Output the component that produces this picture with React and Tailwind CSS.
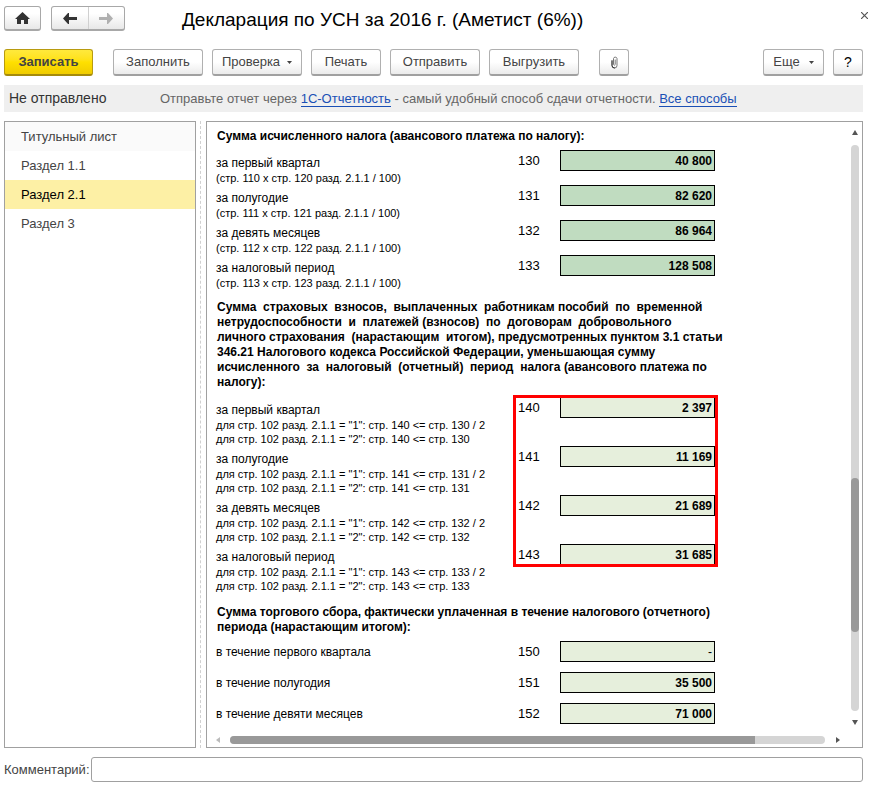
import React, { useState } from 'react';
import clsx from 'clsx';

const sections = ['Титульный лист', 'Раздел 1.1', 'Раздел 2.1', 'Раздел 3'];

const calculatedTax = [
  { code: '130', label: 'за первый квартал', notes: ['(стр. 110 x стр. 120 разд. 2.1.1 / 100)'], value: '40 800' },
  { code: '131', label: 'за полугодие', notes: ['(стр. 111 x стр. 121 разд. 2.1.1 / 100)'], value: '82 620' },
  { code: '132', label: 'за девять месяцев', notes: ['(стр. 112 x стр. 122 разд. 2.1.1 / 100)'], value: '86 964' },
  { code: '133', label: 'за налоговый период', notes: ['(стр. 113 x стр. 123 разд. 2.1.1 / 100)'], value: '128 508' },
];

const contributions = [
  {
    code: '140',
    label: 'за первый квартал',
    notes: ['для стр. 102 разд. 2.1.1 = "1": стр. 140 <= стр. 130 / 2', 'для стр. 102 разд. 2.1.1 = "2": стр. 140 <= стр. 130'],
    value: '2 397',
  },
  {
    code: '141',
    label: 'за полугодие',
    notes: ['для стр. 102 разд. 2.1.1 = "1": стр. 141 <= стр. 131 / 2', 'для стр. 102 разд. 2.1.1 = "2": стр. 141 <= стр. 131'],
    value: '11 169',
  },
  {
    code: '142',
    label: 'за девять месяцев',
    notes: ['для стр. 102 разд. 2.1.1 = "1": стр. 142 <= стр. 132 / 2', 'для стр. 102 разд. 2.1.1 = "2": стр. 142 <= стр. 132'],
    value: '21 689',
  },
  {
    code: '143',
    label: 'за налоговый период',
    notes: ['для стр. 102 разд. 2.1.1 = "1": стр. 143 <= стр. 133 / 2', 'для стр. 102 разд. 2.1.1 = "2": стр. 143 <= стр. 133'],
    value: '31 685',
  },
];

const tradeFee = [
  { code: '150', label: 'в течение первого квартала', value: '-' },
  { code: '151', label: 'в течение полугодия', value: '35 500' },
  { code: '152', label: 'в течение девяти месяцев', value: '71 000' },
];

const contributionsTitle = [
  'Сумма  страховых  взносов,  выплаченных  работникам пособий  по  временной',
  'нетрудоспособности  и  платежей (взносов)  по  договорам  добровольного',
  'личного страхования  (нарастающим  итогом), предусмотренных пунктом 3.1 статьи',
  '346.21 Налогового кодекса Российской Федерации, уменьшающая сумму',
  'исчисленного  за  налоговый  (отчетный)  период  налога (авансового платежа по',
  'налогу):',
];

const Caret = () => (
  <svg width="5" height="3" viewBox="0 0 5 3" className="shrink-0" aria-hidden="true">
    <path d="M0 0h5L2.5 3z" fill="#444" />
  </svg>
);

const Arrow = ({ className, flip }) => (
  <svg width="14" height="11" viewBox="0 0 14 11" className={className} aria-hidden="true">
    <path
      d={flip ? 'M0 4h8V0h1l5 5.5L9 11H8V7H0z' : 'M14 4H6V0H5L0 5.5 5 11h1V7h8z'}
      fill="currentColor"
    />
  </svg>
);

const ToolButton = ({ className, children, ...props }) => (
  <button
    className={clsx(
      'flex h-[27px] shrink-0 items-center justify-center rounded-[3px] border border-b-2 text-[13px]',
      className
    )}
    {...props}
  >
    {children}
  </button>
);

const plain = 'border-[#b0b0b0] border-b-[#a0a0a0] bg-linear-to-b from-white from-50% to-[#ebebeb] text-[#444]';
const navBox = 'rounded-[3px] border border-b-2 border-[#a8a8a8] bg-linear-to-b from-white from-30% to-[#e8e8e8]';

const FormTitle = ({ lines }) => (
  <h2 className="pl-px text-[12px] leading-[15px] font-bold">
    {lines.map((line) => (
      <span key={line} className="block whitespace-pre">{line}</span>
    ))}
  </h2>
);

const FormRow = ({ row, dark }) => {
  const [value, setValue] = useState(row.value);

  return (
    <div className="grid grid-cols-[302px_42px_155px] items-start">
      <label htmlFor={`line-${row.code}`} className={row.notes ? 'pt-[5px]' : 'pt-[3px]'}>
        <span className="block text-[12px] leading-4">{row.label}</span>
        {row.notes?.map((note) => (
          <span key={note} className="block text-[11px] leading-[14px] whitespace-nowrap">{note}</span>
        ))}
      </label>
      <span className="text-[13px] leading-[21px]">{row.code}</span>
      <input
        id={`line-${row.code}`}
        value={value}
        onChange={(e) => setValue(e.target.value)}
        className={clsx(
          'h-[21px] w-full border border-black pr-[2px] text-right text-[12px] outline-none',
          value !== '-' && 'font-bold',
          dark ? 'bg-[#c0dcc0]' : 'bg-[#e6efdc]'
        )}
      />
    </div>
  );
};

export default function App() {
  const [active, setActive] = useState('Раздел 2.1');

  return (
    <div className="flex flex-col bg-white pl-1 font-['Liberation_Sans',Arial,sans-serif] text-black">
      <header className="flex items-start pt-[6px]">
        <button className={clsx(navBox, 'flex h-[25px] w-[37px] items-center justify-center')} aria-label="Домой">
          <svg width="15" height="12" viewBox="0 0 15 12" aria-hidden="true">
            <path d="M7.5 0L0 7h2v5h4V8h3v4h4V7h2z" fill="#333" />
          </svg>
        </button>
        <div className={clsx(navBox, 'ml-[10px] flex h-[25px] w-[74px]')}>
          <button className="flex flex-1 items-center justify-center border-r border-[#d0d0d0]" aria-label="Назад">
            <Arrow className="text-[#333]" />
          </button>
          <button className="flex flex-1 items-center justify-center" aria-label="Вперед">
            <Arrow flip className="text-[#b0b0b0]" />
          </button>
        </div>
        <h1 className="ml-[57px] text-[19px] leading-[27px] whitespace-nowrap">Декларация по УСН за 2016 г. (Аметист (6%))</h1>
        <button className="mt-[6px] mr-[2px] ml-auto" aria-label="Закрыть">
          <svg width="7" height="7" viewBox="0 0 7 7" aria-hidden="true">
            <path d="M0 0l7 7M7 0L0 7" stroke="#555" strokeWidth="1.2" />
          </svg>
        </button>
      </header>

      <div className="flex flex-col pr-[7px]">
        <div className="mt-4 flex gap-[9px]">
          <ToolButton className="mr-[11px] w-[89px] border-[#b89b10] border-b-[#a58b0c] bg-linear-to-b from-[#ffe93c] via-[#ffe000] to-[#f0cc00] font-bold text-[#444]">
            Записать
          </ToolButton>
          <ToolButton className={clsx(plain, 'w-[90px]')}>Заполнить</ToolButton>
          <ToolButton className={clsx(plain, 'w-[90px] gap-[7px]')}>Проверка <Caret /></ToolButton>
          <ToolButton className={clsx(plain, 'w-[70px]')}>Печать</ToolButton>
          <ToolButton className={clsx(plain, 'w-[90px]')}>Отправить</ToolButton>
          <ToolButton className={clsx(plain, 'w-[90px]')}>Выгрузить</ToolButton>
          <ToolButton className={clsx(plain, 'ml-[11px] w-[30px]')} aria-label="Прикрепить файл">
            <svg width="7" height="13" viewBox="0 0 7 13" fill="none" strokeLinecap="round" aria-hidden="true">
              <path d="M1 4.500V9.500a2.500 2.500 0 0 0 5 0V2.500a1.800 1.800 0 0 0-3.500 0V8.500a1 1 0 0 0 1.700 0V4" stroke="#777" />
              <path d="M1 5v4.500a2.500 2.500 0 0 0 2.500 2.500" stroke="#333" />
            </svg>
          </ToolButton>
          <ToolButton className={clsx(plain, 'ml-auto w-[61px] gap-[9px]')}>Еще <Caret /></ToolButton>
          <ToolButton className={clsx(plain, 'w-[30px] text-[14px] text-black')} aria-label="Справка">?</ToolButton>
        </div>

        <div className="mt-[9px] flex h-[27px] items-center bg-[#efefef] pl-[5px]">
          <span className="w-[151px] text-[14px] text-[#333]">Не отправлено</span>
          <p className="text-[13px] whitespace-nowrap text-[#666]">
            Отправьте отчет через <a href="#report" className="border-b border-[#1a4fb5] text-[#1a4fb5]">1С-Отчетность</a> - самый удобный способ сдачи отчетности.{' '}
            <a href="#all" className="border-b border-[#1a4fb5] text-[#1a4fb5]">Все способы</a>
          </p>
        </div>

        <main className="mt-[9px] flex">
          <nav className="w-[192px] shrink-0 border border-[#a0a0a0]">
            {sections.map((name, i) => (
              <button
                key={name}
                onClick={() => setActive(name)}
                className={clsx(
                  'block h-[29px] w-full pl-4 text-left text-[13px]',
                  active === name ? 'bg-[#fdf0a5] text-black' : 'text-[#444]',
                  active !== name && i === 0 && 'bg-[#fafafa]'
                )}
              >
                {name}
              </button>
            ))}
          </nav>
          <div className="ml-1 w-[6px] shrink-0 border-l border-dashed border-[#d0d0d0]" />

          <div className="min-w-0 flex-1 border border-[#a0a0a0]">
            <div className="flex">
              <form className="min-w-0 flex-1 pt-[7px] pl-[9px]">
                <FormTitle lines={['Сумма исчисленного налога (авансового платежа по налогу):']} />
                <div className="mt-[6px] grid auto-rows-[35px]">
                  {calculatedTax.map((row) => <FormRow key={row.code} row={row} dark />)}
                </div>

                <div className="mt-[10px]">
                  <FormTitle lines={contributionsTitle} />
                </div>
                <div className="relative mt-[7px] grid auto-rows-[49px]">
                  {contributions.map((row) => <FormRow key={row.code} row={row} />)}
                  {/* highlight over codes 140-143 */}
                  <div className="pointer-events-none absolute -top-[2px] left-[297px] h-[172px] w-[205px] border-3 border-[#ff0000]" />
                </div>

                <div className="mt-3">
                  <FormTitle lines={['Сумма торгового сбора, фактически уплаченная в течение налогового (отчетного)', 'периода (нарастающим итогом):']} />
                </div>
                <div className="mt-[6px] grid auto-rows-[31px]">
                  {tradeFee.map((row) => <FormRow key={row.code} row={row} />)}
                </div>
              </form>

              <div className="mr-[3px] flex w-2 flex-col items-center pt-2 pb-[9px]" aria-hidden="true">
                <svg width="6" height="5" viewBox="0 0 6 5"><path d="M3 0l3 5H0z" fill="#555" /></svg>
                <div className="mt-[10px] mb-[9px] flex w-2 flex-1 flex-col rounded-full bg-[#d5d5d5]">
                  <div className="flex-[332]" />
                  <div className="flex-[154] rounded-full bg-[#999]" />
                  <div className="flex-[79]" />
                </div>
                <svg width="6" height="5" viewBox="0 0 6 5"><path d="M3 5L0 0h6z" fill="#555" /></svg>
              </div>
            </div>

            <div className="mt-[2px] mr-[22px] mb-[3px] ml-[9px] flex items-center" aria-hidden="true">
              <svg width="4" height="6" viewBox="0 0 4 6"><path d="M0 3l4-3v6z" fill="#bbb" /></svg>
              <div className="mr-[11px] ml-[10px] flex h-2 flex-1 rounded-full bg-[#d5d5d5]">
                <div className="flex-[525] rounded-l-full bg-[#999]" />
                <div className="flex-[70]" />
              </div>
              <svg width="4" height="6" viewBox="0 0 4 6"><path d="M4 3L0 0v6z" fill="#555" /></svg>
            </div>
          </div>
        </main>

        <div className="mt-[9px] mb-1 flex items-center">
          <label htmlFor="comment" className="w-[87px] shrink-0 text-[13px] text-[#444]">Комментарий:</label>
          <input id="comment" className="h-[25px] min-w-0 flex-1 rounded-[3px] border border-[#a0a0a0] px-1 text-[13px] outline-none" />
        </div>
      </div>
    </div>
  );
}
